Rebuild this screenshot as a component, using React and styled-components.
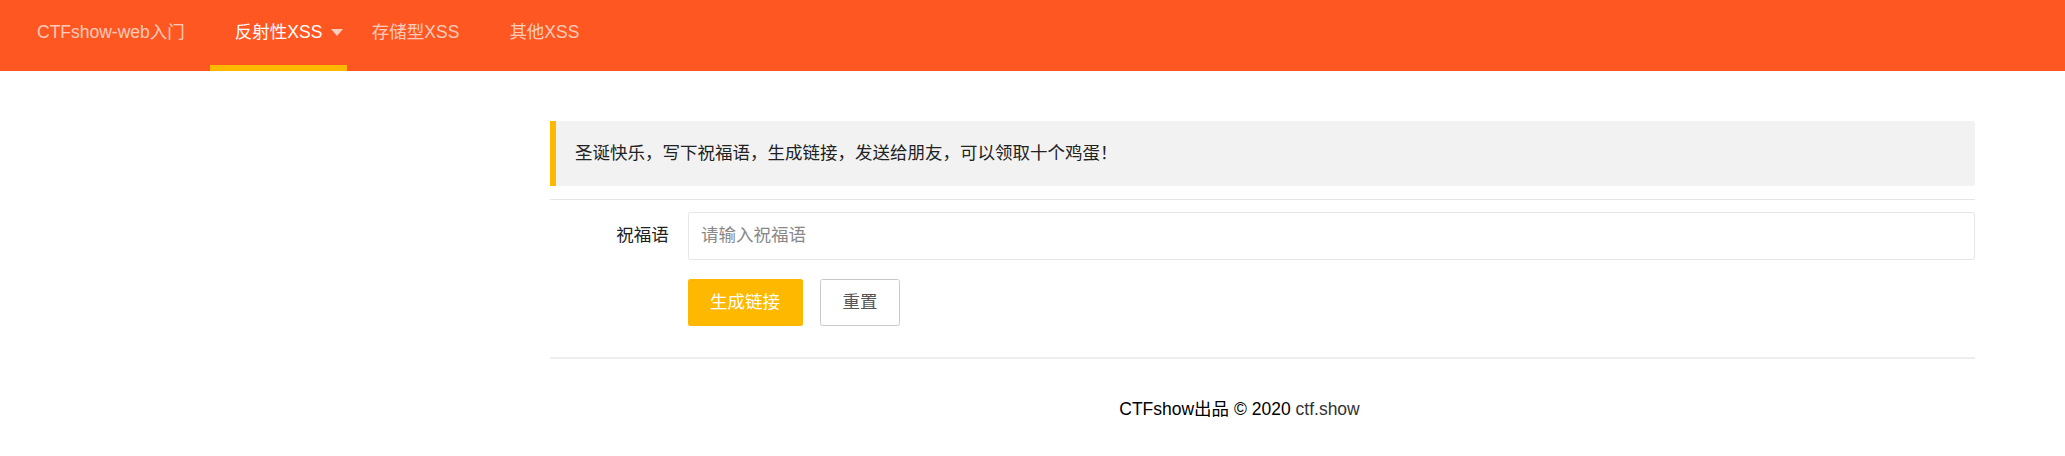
import React from "react";
import styled, { createGlobalStyle } from "styled-components";

const FONT = `"Liberation Sans", Arial, "Noto Sans CJK SC", sans-serif`;

const Global = createGlobalStyle`
  html, body {
    margin: 0;
    padding: 0;
    background: #fff;
  }
  body {
    font-family: ${FONT};
    font-size: 17.5px;
    color: #333;
  }
  * { box-sizing: border-box; }
`;

const NAV_ITEMS = [
  { label: "CTFshow-web入门" },
  { label: "反射性XSS", active: true, more: true },
  { label: "存储型XSS" },
  { label: "其他XSS" },
];

export default function App() {
  return (
    <>
      <Global />
      <Nav>
        {NAV_ITEMS.map((it) => (
          <NavItem key={it.label} $active={it.active} $more={it.more}>
            {it.label}
            {it.more && <Caret />}
            {it.active && <NavBar />}
          </NavItem>
        ))}
      </Nav>

      <Main>
        <Quote>圣诞快乐，写下祝福语，生成链接，发送给朋友，可以领取十个鸡蛋！</Quote>
        <Rule $top={13} $bottom={12} />

        <FormItem>
          <Label>祝福语</Label>
          <Input placeholder="请输入祝福语" />
        </FormItem>

        <Actions>
          <Button $warm>生成链接</Button>
          <Button>重置</Button>
        </Actions>

        <Rule $top={31} $bottom={0} $thick />
      </Main>

      <Footer>
        <span className="own">CTFshow出品 © 2020 </span>
        <a href="#">ctf.show</a>
      </Footer>
    </>
  );
}

const Nav = styled.ul`
  display: flex;
  margin: 0;
  padding: 0 0 0 12px;
  list-style: none;
  height: 71px;
  background: #ff5722;
`;

const NavItem = styled.li`
  position: relative;
  height: 71px;
  line-height: 65px;
  padding: 0 ${(p) => (p.$more ? "24.5px" : "25px")} 0 25px;
  font-size: 17.5px;
  white-space: nowrap;
  color: ${(p) => (p.$active ? "#fff" : "rgba(255,255,255,0.7)")};
  cursor: pointer;
`;

const Caret = styled.span`
  position: absolute;
  right: 4px;
  top: 29px;
  width: 0;
  height: 0;
  border-style: solid;
  border-width: 7px 6px 0 6px;
  border-color: rgba(255, 255, 255, 0.7) transparent transparent transparent;
`;

const NavBar = styled.span`
  position: absolute;
  left: 0;
  right: 0;
  bottom: 0;
  height: 6px;
  background: #ffb800;
`;

const Main = styled.div`
  padding: 50px 90px 0 550px;
`;

const Quote = styled.div`
  display: flex;
  align-items: center;
  height: 65px;
  padding: 0 19px;
  border-left: 6px solid #ffb800;
  border-radius: 0 2.5px 2.5px 0;
  background: #f2f2f2;
  font-size: 17.5px;
  line-height: 27.5px;
  color: #222;
`;

const Rule = styled.div`
  height: ${(p) => (p.$thick ? "2px" : "1px")};
  margin: ${(p) => p.$top}px 0 ${(p) => p.$bottom}px;
  background: ${(p) => (p.$thick ? "#eeeeee" : "#e6e6e6")};
`;

const FormItem = styled.div`
  display: flex;
  align-items: center;
  height: 47.5px;
  margin-bottom: 19px;
`;

const Label = styled.label`
  flex: 0 0 137.5px;
  padding-right: 18.75px;
  text-align: right;
  font-size: 17.5px;
  line-height: 25px;
  color: #222;
`;

const Input = styled.input`
  flex: 1;
  height: 47.5px;
  padding: 0 12.5px;
  border: 1px solid #e6e6e6;
  border-radius: 2.5px;
  font-family: ${FONT};
  font-size: 17.5px;
  color: #333;
  outline: none;
  &::placeholder {
    color: #888;
  }
`;

const Actions = styled.div`
  display: flex;
  gap: 17.5px;
  margin-left: 137.5px;
  height: 47.5px;
`;

const Button = styled.button`
  height: 47.5px;
  padding: 0 ${(p) => (p.$warm ? "22.5px" : "21.5px")};
  border: ${(p) => (p.$warm ? "none" : "1px solid #c9c9c9")};
  border-radius: 2.5px;
  background: ${(p) => (p.$warm ? "#ffb800" : "#fff")};
  color: ${(p) => (p.$warm ? "#fff" : "#555")};
  font-family: ${FONT};
  font-size: 17.5px;
  line-height: 45px;
  cursor: pointer;
`;

const Footer = styled.p`
  margin: 37px 0 0;
  padding: 0 90px 0 504px;
  text-align: center;
  font-size: 17.5px;
  line-height: 27.5px;
  .own {
    color: #000;
  }
  a {
    color: #333;
    text-decoration: none;
  }
`;
